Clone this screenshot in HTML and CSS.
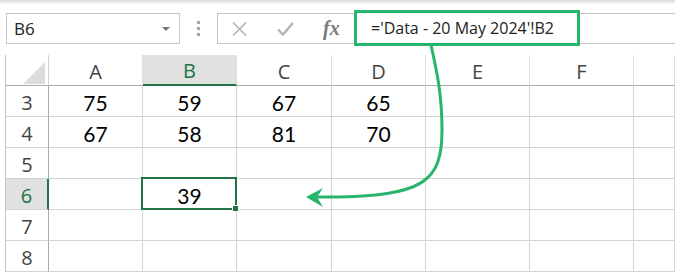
FILE: index.html
```html
<!DOCTYPE html>
<html>
<head lang="en">
    <meta charset="UTF-8">
    <title>Sheet reference</title>
    <link rel="stylesheet" href="styles.css">
</head>
<body>
<div class="topband"></div>

<!-- name box + formula bar -->
<div class="toolbar">
    <div class="namebox">
        <span>B6</span>
        <i class="caret"></i>
    </div>
    <div class="grip"><i></i><i></i><i></i></div>
    <div class="fxbar">
        <div class="fxbtns">
            <svg class="ico" width="17" height="14" viewBox="0 0 17 14">
                <path d="M2 0.5 L15 13.5 M15 0.5 L2 13.5" stroke="#b4b4b4" stroke-width="1.6" fill="none"/>
            </svg>
            <svg class="ico" width="17" height="14" viewBox="0 0 17 14">
                <path d="M1 7.5 L6 12.5 L16 1" stroke="#b4b4b4" stroke-width="2.4" fill="none"/>
            </svg>
            <span class="fx">fx</span>
        </div>
        <div class="formula">='Data - 20 May 2024'!B2</div>
    </div>
</div>

<!-- grid -->
<div class="sheet">
    <div class="corner"><i></i></div>
    <div class="colhead">A</div>
    <div class="colhead sel">B</div>
    <div class="colhead">C</div>
    <div class="colhead">D</div>
    <div class="colhead">E</div>
    <div class="colhead">F</div>
    <div class="colhead"></div>

    <div class="rowhead">3</div>
    <div class="cell">75</div><div class="cell">59</div><div class="cell">67</div><div class="cell">65</div>
    <div class="cell"></div><div class="cell"></div><div class="cell"></div>

    <div class="rowhead">4</div>
    <div class="cell">67</div><div class="cell">58</div><div class="cell">81</div><div class="cell">70</div>
    <div class="cell"></div><div class="cell"></div><div class="cell"></div>

    <div class="rowhead">5</div>
    <div class="cell"></div><div class="cell"></div><div class="cell"></div><div class="cell"></div>
    <div class="cell"></div><div class="cell"></div><div class="cell"></div>

    <div class="rowhead sel">6</div>
    <div class="cell"></div><div class="cell active">39</div><div class="cell"></div><div class="cell"></div>
    <div class="cell"></div><div class="cell"></div><div class="cell"></div>

    <div class="rowhead">7</div>
    <div class="cell"></div><div class="cell"></div><div class="cell"></div><div class="cell"></div>
    <div class="cell"></div><div class="cell"></div><div class="cell"></div>

    <div class="rowhead">8</div>
    <div class="cell"></div><div class="cell"></div><div class="cell"></div><div class="cell"></div>
    <div class="cell"></div><div class="cell"></div><div class="cell"></div>
</div>

<!-- annotation arrow -->
<svg class="arrow" width="675" height="273" viewBox="0 0 675 273">
    <path d="M431 45 C437 72 442 95 442 130 C442 182 424 196 330 197 L314 197" stroke="#26b56b" stroke-width="3" fill="none"/>
    <polygon points="306,197 323,188 317,197 323,207" fill="#26b56b"/>
</svg>
</body>
</html>
```

FILE: styles.css
```css
html, body{
    margin: 0;
    padding: 0;
    background: #fff;
    width: 675px;
    height: 273px;
    overflow: hidden;
    font-family: "Open Sans", "Noto Sans", sans-serif;
}

.topband{
    height: 5px;
    background: linear-gradient(#d9d9d9, #fff);
}

/* toolbar */
.toolbar{
    display: flex;
    align-items: center;
    height: 31px;
    margin-top: 8px;
}

.namebox{
    width: 174px;
    height: 31px;
    margin-left: 6px;
    box-sizing: border-box;
    border: 1px solid #c6c6c6;
    display: flex;
    align-items: center;
    padding: 0 7px;
    font-size: 17px;
    color: #222;
}

.namebox span{
    flex: 1;
}

.caret{
    width: 0;
    height: 0;
    border-left: 4px solid transparent;
    border-right: 4px solid transparent;
    border-top: 4px solid #777;
    margin-right: 2px;
}

.grip{
    width: 37px;
    display: flex;
    flex-direction: column;
    align-items: center;
    gap: 3px;
}

.grip i{
    width: 3px;
    height: 3px;
    background: #a6a6a6;
}

.fxbar{
    flex: 1;
    height: 31px;
    box-sizing: border-box;
    border: 1px solid #c6c6c6;
    border-right: none;
    display: flex;
}

.fxbtns{
    width: 136px;
    display: flex;
    align-items: center;
    padding-left: 13px;
    gap: 29px;
    box-sizing: border-box;
}

.fx{
    font-family: "Liberation Serif", serif;
    font-style: italic;
    font-weight: bold;
    font-size: 20px;
    color: #7a7a7a;
    margin-left: 0;
}

.formula{
    width: 226px;
    height: 36px;
    margin-top: -4px;
    box-sizing: border-box;
    border: 3px solid #26b56b;
    padding-left: 14px;
    display: flex;
    align-items: center;
    font-size: 16px;
    color: #222;
    background: #fff;
}

/* sheet grid */
.sheet{
    display: grid;
    grid-template-columns: 43px 94px 94px 95px 94px 104px 104px 1fr;
    grid-auto-rows: 31px;
    margin: 11px 0 0 5px;
    border-left: 1px solid #c4c4c4;
}

.sheet > div{
    box-sizing: border-box;
    border-right: 1px solid #d4d4d4;
    border-bottom: 1px solid #d4d4d4;
    display: flex;
    align-items: center;
    justify-content: center;
}

.corner{
    position: relative;
    border-bottom-color: #ababab !important;
    border-right-color: #d4d4d4 !important;
}

.corner i{
    width: 0;
    height: 0;
    border-left: 22px solid transparent;
    border-bottom: 22px solid #dcdcdc;
    margin: 5px 0 0 14px;
}

.colhead{
    font-size: 20px;
    color: #444;
    border-right-color: #dedede !important;
    border-bottom-color: #ababab !important;
    padding-top: 2px;
}

.colhead.sel{
    background: #e1e1e1;
    color: #217346;
    border-bottom: 2px solid #217346 !important;
}

.rowhead{
    font-size: 20px;
    color: #444;
    border-right-color: #ababab !important;
    padding-top: 2px;
}

.rowhead.sel{
    background: #e1e1e1;
    color: #217346;
    border-right: 2px solid #217346 !important;
}

.cell{
    font-family: "Lato", "Open Sans", sans-serif;
    font-size: 21px;
    color: #000;
    padding-top: 3px;
    position: relative;
}

.cell.active::after{
    content: "";
    position: absolute;
    left: -2px;
    top: -2px;
    right: -1px;
    bottom: -1px;
    border: 2px solid #217346;
}

.cell.active::before{
    content: "";
    position: absolute;
    right: -3px;
    bottom: -3px;
    width: 5px;
    height: 5px;
    background: #217346;
    border: 1px solid #fff;
    z-index: 1;
}

.arrow{
    position: absolute;
    left: 0;
    top: 0;
    pointer-events: none;
}
```
